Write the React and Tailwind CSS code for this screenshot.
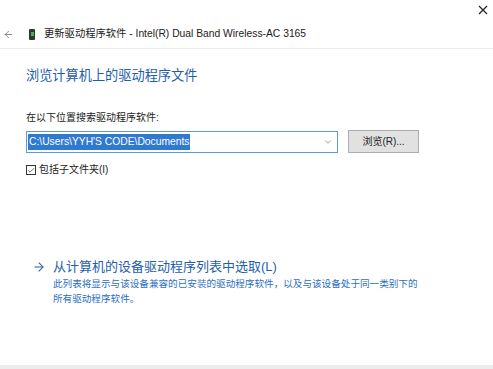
import { ArrowLeft, ArrowRight, ChevronDown, Check } from "lucide-react";

const FONT = "font-['Segoe_UI','Liberation_Sans','Noto_Sans_CJK_SC',sans-serif]";

export default function App() {
  return (
    <div className={`relative flex h-[369px] w-[493px] flex-col overflow-hidden bg-white ${FONT}`}>
      {/* ── Close button row ───────────────────────────── */}
      <div className="flex h-[20px] items-center justify-end pr-[5px]">
        <svg width="10" height="10" viewBox="0 0 10 10" className="shrink-0">
          <path d="M1 1 L9 9 M9 1 L1 9" stroke="#222" strokeWidth="1.2" fill="none" />
        </svg>
      </div>

      {/* ── Header ─────────────────────────────────────── */}
      <div className="flex h-[29px] items-center border-b border-[#ececec] pl-[3px]">
        <ArrowLeft size={11} strokeWidth={1.5} className="text-[#555]" />
        <div className="ml-[15px] flex h-[11px] w-[6px] flex-col items-center justify-center rounded-[1px] bg-[#2d3a2d]">
          <span className="h-[4px] w-[3px] bg-[#4caf50]" />
        </div>
        <span className="ml-[9px] text-[10.3px] text-[#222]">
          更新驱动程序软件 - Intel(R) Dual Band Wireless-AC 3165
        </span>
      </div>

      {/* ── Body ───────────────────────────────────────── */}
      <div className="flex flex-col pl-[26px]">
        <h1 className="mt-[18px] text-[13.2px] leading-[18px] text-[#1f5ea8]">
          浏览计算机上的驱动程序文件
        </h1>

        <p className="mt-[26px] text-[10px] leading-[14px] text-[#222]">
          在以下位置搜索驱动程序软件:
        </p>

        <div className="mt-[5px] flex items-center">
          <div className="flex h-[22px] w-[312px] items-center border border-[#5a9bd5] px-[1px]">
            <span className="bg-[#3079d0] px-[1px] text-[10.3px] leading-[16px] text-white">
              C:\Users\YYH'S CODE\Documents
            </span>
            <ChevronDown size={10} strokeWidth={1.5} className="ml-auto mr-[3px] text-[#666]" />
          </div>
          <button className="ml-[10px] h-[23px] w-[71px] border border-[#adadad] bg-[#e1e1e1] text-[10px] text-[#222]">
            浏览(R)...
          </button>
        </div>

        <label className="mt-[10px] flex items-center text-[10px] leading-[14px] text-[#222]">
          <span className="flex h-[10px] w-[10px] items-center justify-center border border-[#333] bg-white">
            <Check size={9} strokeWidth={2} className="text-[#333]" />
          </span>
          <span className="ml-[3px]">包括子文件夹(I)</span>
        </label>

        <div className="mt-[81px] flex flex-col">
          <div className="flex items-center">
            <ArrowRight size={14} strokeWidth={1.75} className="ml-[6px] text-[#1f5ea8]" />
            <span className="ml-[7px] text-[13px] leading-[18px] text-[#1f5ea8]">
              从计算机的设备驱动程序列表中选取(L)
            </span>
          </div>
          <p className="ml-[27px] mt-[0px] text-[9.6px] leading-[15px] text-[#2d6fbf]">
            <span className="block">此列表将显示与该设备兼容的已安装的驱动程序软件，以及与该设备处于同一类别下的</span>
            <span className="block">所有驱动程序软件。</span>
          </p>
        </div>
      </div>

      {/* ── Bottom band ────────────────────────────────── */}
      <div className="mt-auto h-[4px] bg-[#ececec]" />
    </div>
  );
}
